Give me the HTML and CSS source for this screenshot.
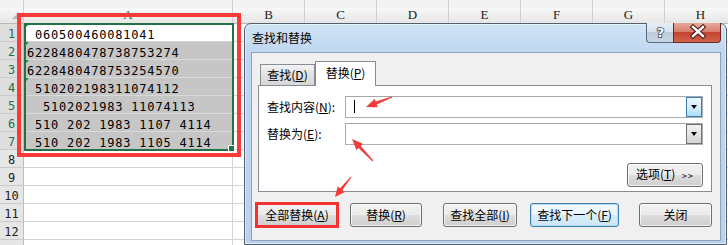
FILE: index.html
```html
<!DOCTYPE html>
<html lang="zh-CN">
<head>
<meta charset="utf-8">
<title>查找和替换</title>
<link rel="stylesheet" href="styles.css">
</head>
<body>
<div class="sheet">
  <div class="hd corner"><i class="corner-tri"></i></div>
  <div class="hd hd-a">A</div>
  <div class="hd">B</div>
  <div class="hd">C</div>
  <div class="hd">D</div>
  <div class="hd">E</div>
  <div class="hd">F</div>
  <div class="hd">G</div>
  <div class="hd">H</div>

  <div class="rh on">1</div><div class="ca txt flag"> 060500460081041</div>
  <div class="rest"></div>
  <div class="rh on">2</div><div class="ca txt sel flag">6228480478738753274</div>
  <div class="rh on">3</div><div class="ca txt sel flag">6228480478753254570</div>
  <div class="rh on">4</div><div class="ca txt sel flag"> 510202198311074112</div>
  <div class="rh on">5</div><div class="ca txt sel">  5102021983 11074113</div>
  <div class="rh on">6</div><div class="ca txt sel"> 510 202 1983 1107 4114</div>
  <div class="rh on">7</div><div class="ca txt sel"> 510 202 1983 1105 4114</div>
  <div class="rh">8</div><div class="ca"></div>
  <div class="rh">9</div><div class="ca"></div>
  <div class="rh">10</div><div class="ca"></div>
  <div class="rh">11</div><div class="ca"></div>
  <div class="rh">12</div><div class="ca"></div>
  <div class="rh"></div><div class="ca"></div>
</div>

<div class="selection"><i class="handle"></i></div>
<div class="mark-col"></div>

<div class="dialog">
  <div class="titlebar">
    <span class="title">查找和替换</span>
    <div class="caption-btns">
      <span class="cap help">
        <svg width="27" height="20" viewBox="0 0 27 20"><text x="13.5" y="15" class="qmark">?</text></svg>
      </span>
      <span class="cap close">
        <svg width="48" height="20" viewBox="0 0 48 20">
          <path d="M19 5 L29 14 M29 5 L19 14" class="x-out"/>
          <path d="M19 5 L29 14 M29 5 L19 14" class="x-in"/>
        </svg>
      </span>
    </div>
  </div>
  <div class="client">
    <div class="tabs">
      <div class="tab">查找(<u>D</u>)</div>
      <div class="tab active">替换(<u>P</u>)</div>
    </div>
    <div class="panel">
      <span class="lbl">查找内容(<u>N</u>):</span>
      <div class="combo"><span class="caret"></span><span class="drop hot"><i class="tri"></i></span></div>
      <span class="lbl">替换为(<u>E</u>):</span>
      <div class="combo"><span class="drop"><i class="tri"></i></span></div>
      <button class="btn opt">选项(<u>T</u>) <span class="gt">&gt;&gt;</span></button>
    </div>
    <div class="actions">
      <button class="btn b-all">全部替换(<u>A</u>)</button>
      <button class="btn b-rep">替换(<u>R</u>)</button>
      <button class="btn b-fall">查找全部(<u>I</u>)</button>
      <button class="btn b-next default">查找下一个(<u>F</u>)</button>
      <button class="btn b-close">关闭</button>
    </div>
  </div>
</div>

<div class="mark-btn"></div>

<svg class="arrows" width="728" height="245" viewBox="0 0 728 245">
  <polygon points="391.8,96.5 375.8,101.6 374.7,98.8 366,107 377.9,107.3 376.8,104.5 392.2,97.5"/>
  <polygon points="373.4,160.6 360.7,145.9 362.9,143.8 352,139 356.4,150.1 358.5,148 372.6,161.4"/>
  <polygon points="351.4,177.3 342.4,190.1 344.8,192 335,197 337.7,186.4 340.1,188.3 350.6,176.7"/>
</svg>
</body>
</html>
```

FILE: styles.css
```css
html, body {
  margin: 0;
  padding: 0;
  width: 728px;
  height: 245px;
  overflow: hidden;
  background: #ffffff;
}

/* ---------- spreadsheet ---------- */
.sheet {
  display: grid;
  grid-template-columns: 24px 209px repeat(7, 72px);
  grid-template-rows: 24px;
  grid-auto-rows: 18px;
  width: 737px;
  height: 245px;
  overflow: hidden;
}

.hd {
  box-sizing: border-box;
  padding-top: 7px;
  display: flex;
  align-items: center;
  justify-content: center;
  background: linear-gradient(#f3f3f3 0, #f3f3f3 7px, #f8f8f8 8px, #e6e6e6 100%);
  border-right: 1px solid #cfcfcf;
  border-bottom: 1px solid #b9b9b9;
  font-family: "Liberation Serif", "DejaVu Serif", serif;
  font-size: 13px;
  color: #222;
}
.hd-a { color: #217346; }
.corner {
  justify-content: flex-end;
  align-items: flex-end;
  padding: 0 4px 4px 0;
}
.corner-tri {
  width: 0;
  height: 0;
  border-left: 7px solid transparent;
  border-bottom: 7px solid #b8b8b8;
}

.rh {
  box-sizing: border-box;
  background: #e6e6e6;
  border-right: 1px solid #bdbdbd;
  border-bottom: 1px solid #cacaca;
  display: flex;
  align-items: center;
  justify-content: center;
  padding-top: 2px;
  font-family: "DejaVu Sans Mono", monospace;
  font-size: 12px;
  color: #222;
}
.rh.on {
  background: #dedede;
  color: #217346;
}

.ca {
  box-sizing: border-box;
  position: relative;
  border-right: 1px solid #d4d4d4;
  border-bottom: 1px solid #d4d4d4;
  background: #fff;
  overflow: hidden;
}
.ca.sel {
  background: #c6c6c6;
  border-bottom-color: #d9d9d9;
}
.txt {
  white-space: pre;
  padding: 1px 0 0 3px;
  font-family: "DejaVu Sans Mono", monospace;
  font-size: 12px;
  letter-spacing: 0.8px;
  line-height: 20px;
  color: #000;
}
.flag::before {
  content: "";
  position: absolute;
  left: 0;
  top: 0;
  width: 0;
  height: 0;
  border-top: 5px solid #1c8a3f;
  border-right: 5px solid transparent;
}

.rest {
  grid-column: 3 / 10;
  grid-row: 2 / span 13;
  background-color: #fff;
  background-image:
    linear-gradient(to right, transparent 71px, #d4d4d4 71px),
    linear-gradient(to bottom, transparent 17px, #d4d4d4 17px);
  background-size: 72px 100%, 100% 18px;
}

/* selection border (overlay) */
.selection {
  position: absolute;
  left: 24px;
  top: 23px;
  width: 210px;
  height: 128px;
  box-sizing: border-box;
  border: 2px solid #217346;
}
.handle {
  position: absolute;
  right: -3px;
  bottom: -3px;
  width: 5px;
  height: 5px;
  background: #217346;
  border: 1px solid #fff;
}

/* red annotation marks (overlay) */
.mark-col {
  position: absolute;
  left: 17px;
  top: 13px;
  width: 224px;
  height: 144px;
  box-sizing: border-box;
  border: 4px solid #fb3a3a;
}
.mark-btn {
  position: absolute;
  left: 255px;
  top: 202px;
  width: 84px;
  height: 26px;
  box-sizing: border-box;
  border: 3px solid #f43232;
}
.arrows {
  position: absolute;
  left: 0;
  top: 0;
  pointer-events: none;
}
.arrows polygon { fill: #f23b3b; }

/* ---------- dialog ---------- */
.dialog {
  position: absolute;
  left: 244px;
  top: 23px;
  width: 483px;
  height: 222px;
  box-sizing: border-box;
  border: 1px solid #55606d;
  border-radius: 7px 7px 0 0;
  background: linear-gradient(#d0e4f7 0, #bfd7f0 28px, #b9d2ec 100%);
  padding: 0 5px 3px 6px;
  display: flex;
  flex-direction: column;
  font-family: "Noto Sans CJK SC", "Noto Sans", sans-serif;
  font-size: 12px;
  color: #000;
  box-shadow: 0 0 0 1px rgba(255,255,255,0.5) inset;
}

.titlebar {
  height: 28px;
  display: flex;
  align-items: center;
  flex-shrink: 0;
}
.title {
  padding-left: 1px;
  font-size: 12px;
  line-height: 14px;
  margin-top: 0;
}
.caption-btns {
  margin-left: auto;
  align-self: flex-start;
  margin-top: -1px;
  display: flex;
}
.cap {
  display: block;
  height: 20px;
  box-sizing: border-box;
  border: 1px solid #5c6b7c;
  border-top: none;
}
.cap svg { display: block; margin-top: -1px; }
.help {
  width: 27px;
  border-right: none;
  border-radius: 0 0 0 4px;
  background: linear-gradient(#e6eef6 0, #d5e1ed 45%, #bccddd 50%, #c6d6e6 100%);
}
.close {
  width: 48px;
  border-color: #6a2a22;
  border-radius: 0 0 4px 0;
  background: linear-gradient(#e9a99b 0, #d8806d 45%, #c5442f 50%, #d0644c 100%);
}
.qmark {
  font-family: "DejaVu Sans", sans-serif;
  font-weight: bold;
  font-size: 13px;
  text-anchor: middle;
  fill: #fff;
  stroke: #3b4a5a;
  stroke-width: 1.6px;
  paint-order: stroke;
}
.x-out {
  stroke: #4a1a14;
  stroke-width: 4.6;
  stroke-linecap: square;
  fill: none;
}
.x-in {
  stroke: #fff;
  stroke-width: 2.4;
  stroke-linecap: square;
  fill: none;
}

.client {
  flex: 1;
  box-sizing: border-box;
  border: 1px solid #8fa3b8;
  background: #f0f0f0;
  padding: 8px 8px 0 6px;
  display: flex;
  flex-direction: column;
}

.tabs {
  display: flex;
  align-items: flex-end;
  height: 24px;
  margin-left: 2px;
}
.tab {
  box-sizing: border-box;
  width: 55px;
  height: 21px;
  border: 1px solid #898c95;
  border-bottom: none;
  background: linear-gradient(#f3f3f3, #e1e1e1 50%, #d7d7d7);
  display: flex;
  align-items: center;
  justify-content: center;
  line-height: 14px;
}
.tab.active {
  width: 61px;
  height: 25px;
  margin-bottom: -1px;
  background: #fff;
  position: relative;
  z-index: 1;
  padding-bottom: 2px;
}

.panel {
  box-sizing: border-box;
  height: 107px;
  border: 1px solid #898c95;
  background: #fff;
  padding: 10px 8px 9px 8px;
  display: grid;
  grid-template-columns: 78px 1fr;
  grid-template-rows: 22px 22px 24px;
  row-gap: 5px;
  align-items: center;
}
.lbl {
  line-height: 14px;
  white-space: nowrap;
}
.combo {
  box-sizing: border-box;
  height: 22px;
  border: 1px solid #abadb3;
  border-top-color: #a3a6ad;
  background: #fff;
  display: flex;
  align-items: stretch;
}
.caret {
  width: 1px;
  height: 13px;
  background: #000;
  margin: 3px 0 0 8px;
}
.drop {
  margin-left: auto;
  width: 16px;
  box-sizing: border-box;
  border: 1px solid #707070;
  background: linear-gradient(#f3f3f3, #e4e4e4 50%, #d3d3d3);
  display: flex;
  align-items: center;
  justify-content: center;
}
.drop.hot {
  border-color: #3c7fb1;
  background: linear-gradient(#eaf6fd, #d9f0fc 50%, #a9dcf6);
}
.tri {
  width: 0;
  height: 0;
  border-left: 3.5px solid transparent;
  border-right: 3.5px solid transparent;
  border-top: 4px solid #000;
}

.btn {
  box-sizing: border-box;
  height: 24px;
  padding: 0;
  border: 1px solid #707070;
  border-radius: 3px;
  background: linear-gradient(#f2f2f2 0, #ebebeb 50%, #dddddd 51%, #cfcfcf 100%);
  font-family: "Noto Sans CJK SC", "Noto Sans", sans-serif;
  font-size: 12px;
  line-height: 14px;
  color: #000;
  box-shadow: inset 0 0 0 1px rgba(255,255,255,0.7);
}
.btn.default {
  border-color: #3c7fb1;
  background: linear-gradient(#f4fafe 0, #e8f4fc 50%, #d6ecfa 51%, #cde6f7 100%);
  box-shadow: inset 0 0 0 1px #b6def8;
}
.opt {
  grid-column: 2;
  justify-self: end;
  width: 76px;
  margin-top: 13px;
  align-self: start;
}
.gt {
  font-size: 9px;
  letter-spacing: 1px;
  margin-left: 4px;
}

.actions {
  display: flex;
  margin: 11px 0 0 -2px;
}
.b-all { width: 82px; }
.b-rep { width: 72px; margin-left: 12px; }
.b-fall { width: 74px; margin-left: 21px; }
.b-next { width: 89px; margin-left: 13px; }
.b-close { width: 73px; margin-left: 20px; }

u { text-decoration: underline; text-underline-offset: 1px; }
```
